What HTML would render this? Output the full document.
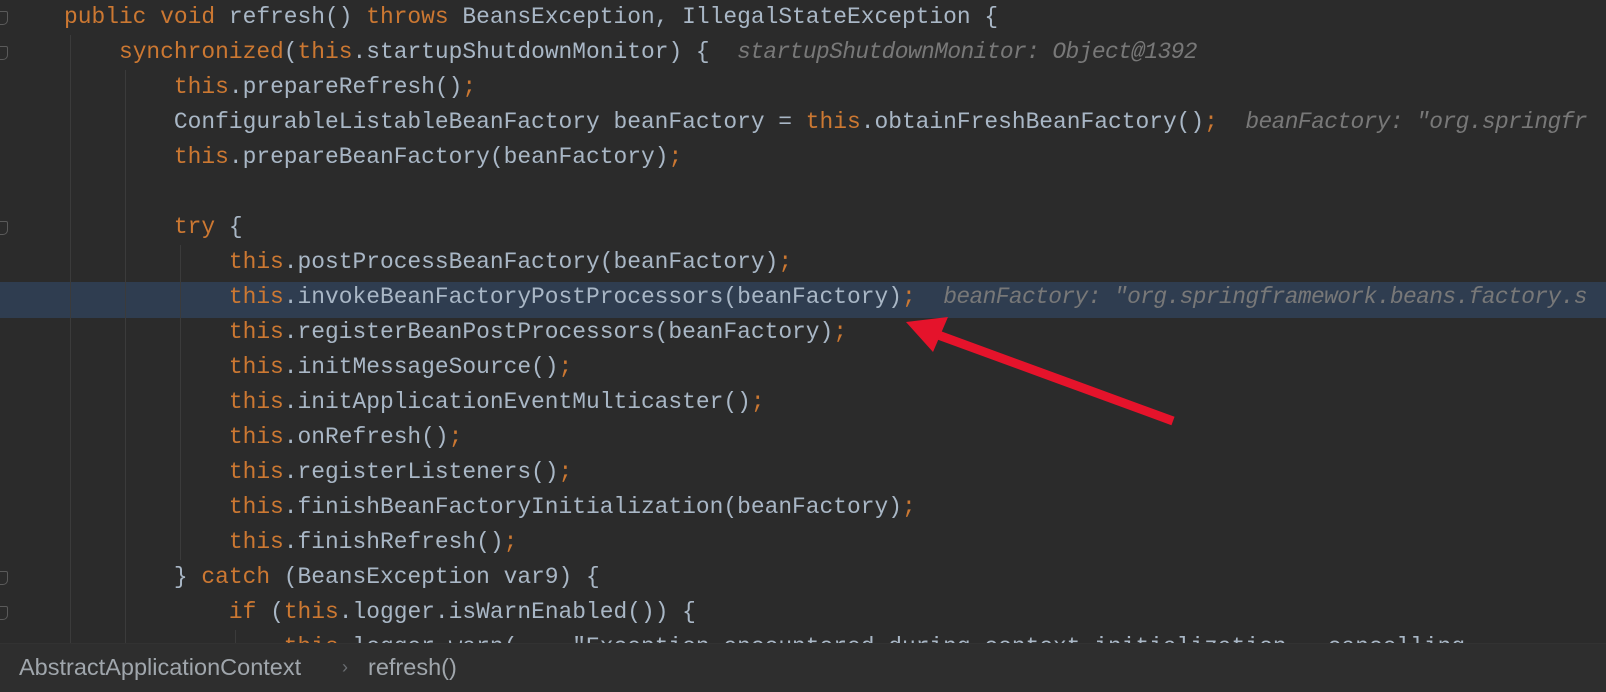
<!DOCTYPE html>
<html><head><meta charset="utf-8"><style>
html,body{margin:0;padding:0;}
body{width:1606px;height:692px;background:#2b2b2b;overflow:hidden;position:relative;font-family:"Liberation Mono",monospace;}
#wrap{position:absolute;left:0;top:0;width:1606px;height:692px;overflow:hidden;}
.l{position:absolute;left:64px;height:35px;line-height:35px;font-size:22.9px;color:#a9b7c6;white-space:pre;}
.k{color:#cc7832}
.h{color:#787878;font-style:italic;letter-spacing:-0.6px}
.hl{position:absolute;left:0;top:282px;width:1606px;height:36px;background:#2f3d50;}
.g{position:absolute;width:1px;background:#3b3b3b;}
.f{position:absolute;left:0;width:7px;height:12px;border:1px solid #5a5a5a;border-left:none;border-radius:0 2px 5px 0;}
.sb{position:absolute;left:0;top:643px;width:1606px;height:49px;background:#2e2e2e;border-top:1px solid #323232;font-family:"Liberation Sans",sans-serif;font-size:23.5px;color:#a0a6ac;line-height:46px;}
</style></head><body><div id="wrap">
<div class="hl"></div>
<div class="g" style="left:70px;top:35px;height:608px"></div>
<div class="g" style="left:125px;top:70px;height:573px"></div>
<div class="g" style="left:180px;top:245px;height:315px"></div>
<div class="g" style="left:235px;top:630px;height:13px"></div>
<div class="f" style="top:11px"></div>
<div class="f" style="top:46px"></div>
<div class="f" style="top:221px"></div>
<div class="f" style="top:571px"></div>
<div class="f" style="top:606px"></div>

<div class="l" style="top:0"><span class="k">public void</span> refresh() <span class="k">throws</span> BeansException, IllegalStateException {</div>
<div class="l" style="top:35px">    <span class="k">synchronized</span>(<span class="k">this</span>.startupShutdownMonitor) {  <span class="h">startupShutdownMonitor: Object@1392</span></div>
<div class="l" style="top:70px">        <span class="k">this</span>.prepareRefresh()<span class="k">;</span></div>
<div class="l" style="top:105px">        ConfigurableListableBeanFactory beanFactory = <span class="k">this</span>.obtainFreshBeanFactory()<span class="k">;</span>  <span class="h">beanFactory: "org.springfr</span></div>
<div class="l" style="top:140px">        <span class="k">this</span>.prepareBeanFactory(beanFactory)<span class="k">;</span></div>
<div class="l" style="top:210px">        <span class="k">try</span> {</div>
<div class="l" style="top:245px">            <span class="k">this</span>.postProcessBeanFactory(beanFactory)<span class="k">;</span></div>
<div class="l" style="top:280px">            <span class="k">this</span>.invokeBeanFactoryPostProcessors(beanFactory)<span class="k">;</span>  <span class="h">beanFactory: "org.springframework.beans.factory.s</span></div>
<div class="l" style="top:315px">            <span class="k">this</span>.registerBeanPostProcessors(beanFactory)<span class="k">;</span></div>
<div class="l" style="top:350px">            <span class="k">this</span>.initMessageSource()<span class="k">;</span></div>
<div class="l" style="top:385px">            <span class="k">this</span>.initApplicationEventMulticaster()<span class="k">;</span></div>
<div class="l" style="top:420px">            <span class="k">this</span>.onRefresh()<span class="k">;</span></div>
<div class="l" style="top:455px">            <span class="k">this</span>.registerListeners()<span class="k">;</span></div>
<div class="l" style="top:490px">            <span class="k">this</span>.finishBeanFactoryInitialization(beanFactory)<span class="k">;</span></div>
<div class="l" style="top:525px">            <span class="k">this</span>.finishRefresh()<span class="k">;</span></div>
<div class="l" style="top:560px">        } <span class="k">catch</span> (BeansException var9) {</div>
<div class="l" style="top:595px">            <span class="k">if</span> (<span class="k">this</span>.logger.isWarnEnabled()) {</div>
<div class="l" style="top:630px">                <span class="k">this</span>.logger.warn(    "Exception encountered during context initialization - cancelling</div>

<svg style="position:absolute;left:0;top:0" width="1606" height="692">
<line x1="1173" y1="421" x2="930" y2="332" stroke="#e5132b" stroke-width="9"/>
<polygon points="906,322 948,317 933,352" fill="#e5132b"/>
</svg>

<div class="sb"><span style="position:absolute;left:19px">AbstractApplicationContext</span><span style="position:absolute;left:342px;color:#6a6e72;font-size:18px">›</span><span style="position:absolute;left:368px">refresh()</span></div>
</div></body></html>
